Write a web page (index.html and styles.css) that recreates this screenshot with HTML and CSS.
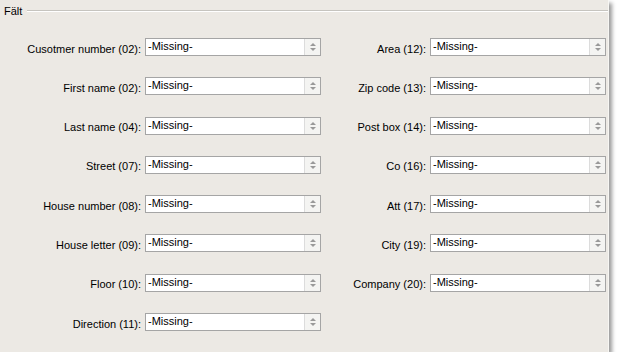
FILE: index.html
```html
<!DOCTYPE html>
<html lang="sv">
<head>
    <meta charset="UTF-8">
    <title>Fält</title>
    <link rel="stylesheet" href="styles.css">
</head>
<body>
    <div class="panel">
        <div class="group-title">
            <span>Fält</span>
            <div class="group-line"></div>
        </div>

        <div class="fields">
            <label>Cusotmer number (02):</label>
            <div class="spin"><span class="value">-Missing-</span><span class="spin-btn"></span></div>
            <label>Area (12):</label>
            <div class="spin"><span class="value">-Missing-</span><span class="spin-btn"></span></div>

            <label>First name (02):</label>
            <div class="spin"><span class="value">-Missing-</span><span class="spin-btn"></span></div>
            <label>Zip code (13):</label>
            <div class="spin"><span class="value">-Missing-</span><span class="spin-btn"></span></div>

            <label>Last name (04):</label>
            <div class="spin"><span class="value">-Missing-</span><span class="spin-btn"></span></div>
            <label>Post box (14):</label>
            <div class="spin"><span class="value">-Missing-</span><span class="spin-btn"></span></div>

            <label>Street (07):</label>
            <div class="spin"><span class="value">-Missing-</span><span class="spin-btn"></span></div>
            <label>Co (16):</label>
            <div class="spin"><span class="value">-Missing-</span><span class="spin-btn"></span></div>

            <label>House number (08):</label>
            <div class="spin"><span class="value">-Missing-</span><span class="spin-btn"></span></div>
            <label>Att (17):</label>
            <div class="spin"><span class="value">-Missing-</span><span class="spin-btn"></span></div>

            <label>House letter (09):</label>
            <div class="spin"><span class="value">-Missing-</span><span class="spin-btn"></span></div>
            <label>City (19):</label>
            <div class="spin"><span class="value">-Missing-</span><span class="spin-btn"></span></div>

            <label>Floor (10):</label>
            <div class="spin"><span class="value">-Missing-</span><span class="spin-btn"></span></div>
            <label>Company (20):</label>
            <div class="spin"><span class="value">-Missing-</span><span class="spin-btn"></span></div>

            <label>Direction (11):</label>
            <div class="spin"><span class="value">-Missing-</span><span class="spin-btn"></span></div>
        </div>
    </div>
</body>
</html>
```

FILE: styles.css
```css
body {
    margin: 0;
    padding: 0;
    background-color: #fff;
    font-family: 'Liberation Sans', Arial, sans-serif;
    font-size: 11px;
    color: #000;
}

.panel {
    width: 609px;
    height: 352px;
    background-color: #ece9e4;
    box-shadow: 3px 3px 4px rgba(0, 0, 0, 0.4);
    border-right: 1px solid #f7f6f3;
    box-sizing: border-box;
}

.group-title {
    display: flex;
    align-items: center;
    padding: 4px 0 0 4px;
    height: 13px;
}

.group-line {
    flex: 1;
    margin-left: 5px;
    height: 0;
    border-top: 1px solid #c6c4bf;
    border-bottom: 1px solid #fff;
}

.fields {
    display: grid;
    grid-template-columns: 141px 176px 101px 176px;
    grid-auto-rows: 18px;
    column-gap: 4px;
    row-gap: 21.3px;
    margin-top: 21px;
}

.fields label {
    text-align: right;
    align-self: center;
    padding-top: 3px;
    white-space: nowrap;
}

.spin {
    display: flex;
    background-color: #fff;
    border: 1px solid #a5a5a5;
    box-sizing: border-box;
}

.value {
    flex: 1;
    padding: 1px 0 0 2px;
}

.spin-btn {
    width: 15px;
    background-color: #f4f4f2;
    border-left: 1px solid #dcdcdc;
    position: relative;
}

.spin-btn::before,
.spin-btn::after {
    content: '';
    position: absolute;
    left: 5px;
    border-left: 3px solid transparent;
    border-right: 3px solid transparent;
}

.spin-btn::before {
    top: 4px;
    border-bottom: 3px solid #999;
}

.spin-btn::after {
    top: 9px;
    border-top: 3px solid #999;
}
```
